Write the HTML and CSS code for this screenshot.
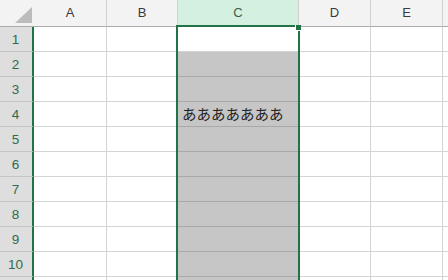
FILE: index.html
```html
<!DOCTYPE html>
<html lang="ja">
  <head>
    <meta charset="UTF-8" />
    <title>Sheet1</title>
    <link rel="stylesheet" href="styles.css">
  </head>
  <body>
    <div class="sheet">
      <div class="grid head">
        <div class="corner"><span class="corner-tri"></span></div>
        <div class="col-head">A</div>
        <div class="col-head">B</div>
        <div class="col-head sel">C</div>
        <div class="col-head">D</div>
        <div class="col-head">E</div>
        <div class="col-head last"></div>
      </div>
      <div class="grid" id="rows"></div>
      <div class="selection"><span class="fill-handle"></span></div>
    </div>

    <script>
      // 行を作る (C1 はアクティブセル、C2 以降は選択範囲)
      const rows = document.getElementById("rows");
      for (let r = 1; r <= 11; r++) {
        // 11 行目は上端しか見えないので番号は出さない
        let html = `<div class="row-head">${r <= 10 ? r : ""}</div>`;
        html += `<div class="cell"></div><div class="cell"></div>`;
        const text = r === 4 ? "あああああああ" : "";
        html += `<div class="cell ${r === 1 ? "active" : "picked"}">${text}</div>`;
        html += `<div class="cell"></div><div class="cell"></div><div class="cell last"></div>`;
        rows.insertAdjacentHTML("beforeend", html);
      }
    </script>
  </body>
</html>
```

FILE: styles.css
```css
body {
  margin: 0;
  overflow: hidden;
  background: #fff;
  font-family: "Liberation Sans", Arial, sans-serif;
}
.sheet {
  position: relative;
  width: 448px;
  height: 280px;
  overflow: hidden;
}
.grid {
  display: grid;
  grid-template-columns: 34px 73px 71px 121px 72px 72px 1fr;
  grid-auto-rows: 25px;
}
.grid.head {
  grid-auto-rows: 27px;
}
.corner,
.col-head {
  background: #f3f3f3;
  border-bottom: 1px solid #ababab;
  border-right: 1px solid #d0d0d0;
  box-sizing: border-box;
}
.corner {
  position: relative;
  border-right: none;
}
.corner-tri {
  position: absolute;
  right: 2px;
  bottom: 3px;
  width: 0;
  height: 0;
  border-left: 17px solid transparent;
  border-bottom: 16px solid #bcbcbc;
}
.col-head {
  display: flex;
  align-items: center;
  justify-content: center;
  font-size: 13px;
  color: #3a3a3a;
  padding-bottom: 2px;
}
.col-head.sel {
  background: #d3f0e0;
  color: #3b5e4c;
}
.col-head.last,
.cell.last {
  border-right: none;
}
.row-head {
  background: #dedede;
  border-right: 2px solid #217346;
  border-bottom: 1px solid #c4c4c4;
  box-sizing: border-box;
  display: flex;
  align-items: center;
  justify-content: center;
  font-size: 13.5px;
  color: #2f6b4c;
  padding-right: 1px;
}
.cell {
  border-right: 1px solid #d4d4d4;
  border-bottom: 1px solid #d4d4d4;
  box-sizing: border-box;
  font-family: "Noto Sans CJK JP", sans-serif;
  font-size: 14.5px;
  line-height: 24px;
  color: #222;
  padding-left: 4px;
  white-space: nowrap;
}
.cell.picked {
  background: #c6c6c6;
  border-bottom-color: #a9a9a9;
}
.selection {
  position: absolute;
  left: 176px;
  top: 25px;
  width: 124px;
  height: 270px;
  border: 2px solid #217346;
  box-sizing: border-box;
}
.fill-handle {
  position: absolute;
  right: -3px;
  top: -2px;
  width: 5px;
  height: 5px;
  background: #217346;
  border-left: 1px solid #fff;
  border-bottom: 1px solid #fff;
}
```
